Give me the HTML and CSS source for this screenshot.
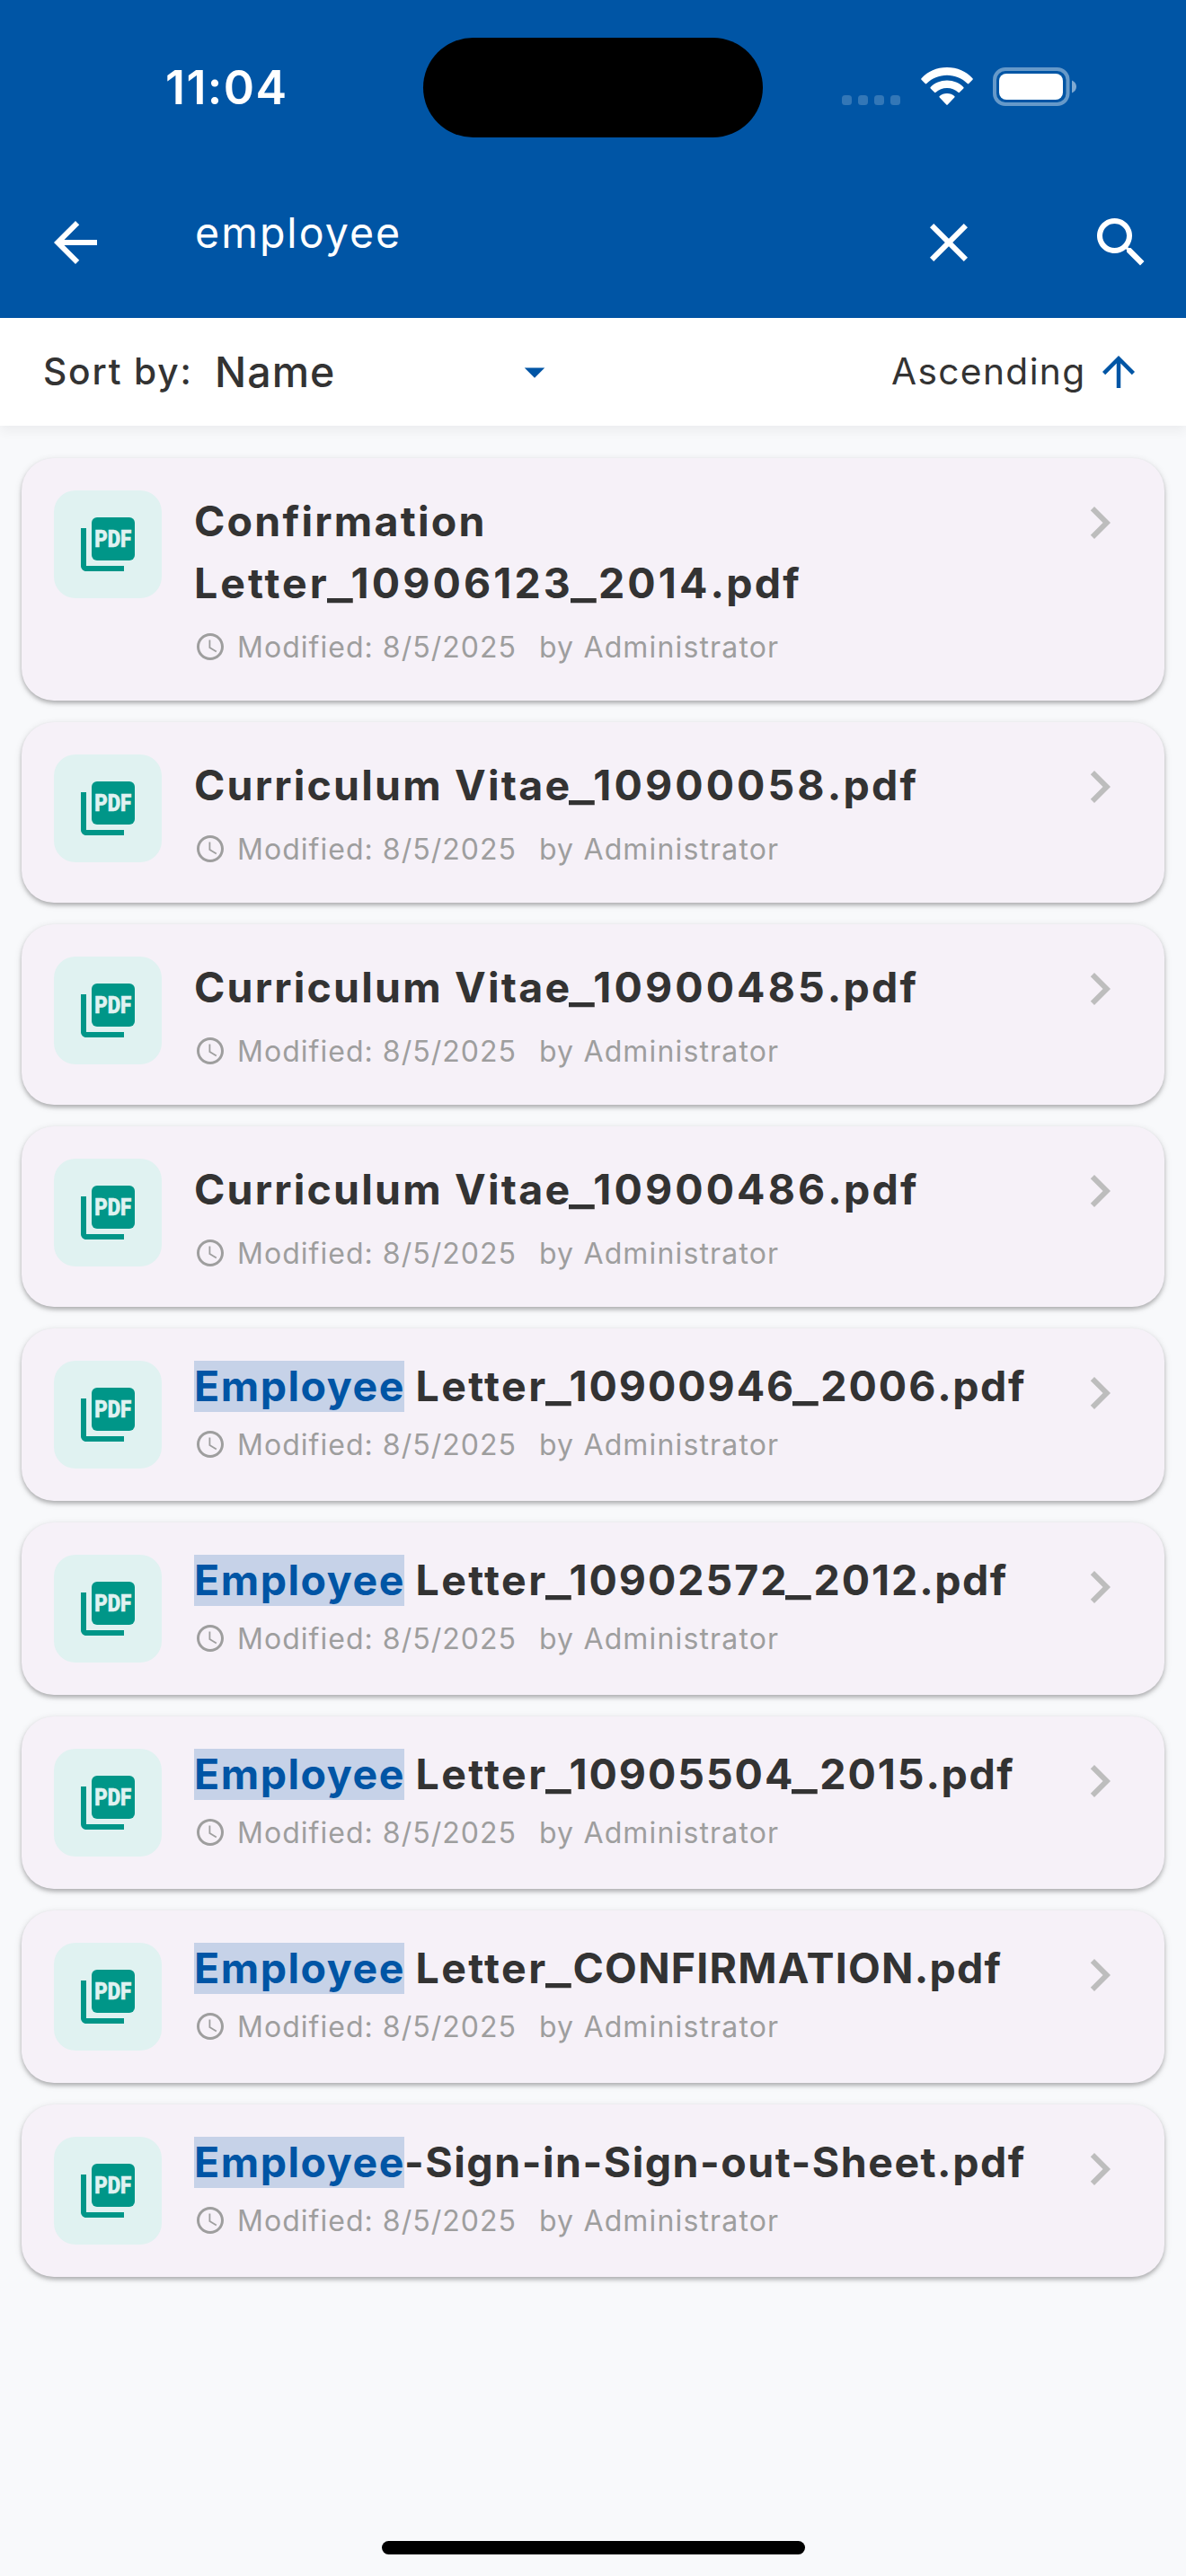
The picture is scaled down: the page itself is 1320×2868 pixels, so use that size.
FILE: index.html
```html
<!DOCTYPE html>
<html lang="en">
<head>
<meta charset="utf-8">
<title>Search files</title>
<link rel="stylesheet" href="styles.css">
</head>
<body>
<svg class="sprite" aria-hidden="true">
  <symbol id="pages" viewBox="0 0 72 72">
    <rect x="18" y="6" width="48" height="48" rx="6"/>
    <path d="M12 18H6v42c0 3.300 2.700 6 6 6h42v-6H12z"/>
  </symbol>
  <symbol id="clock" viewBox="0 0 24 24"><path d="M11.990 2C6.470 2 2 6.480 2 12s4.470 10 9.990 10C17.520 22 22 17.520 22 12S17.520 2 11.990 2zM12 20c-4.420 0-8-3.580-8-8s3.580-8 8-8 8 3.580 8 8-3.580 8-8 8zm.2-13H11v6l5.250 3.150.6-.98-4.650-2.770z"/></symbol>
  <symbol id="chevron" viewBox="0 0 24 24"><path d="M10 6 8.590 7.410 13.170 12l-4.580 4.590L10 18l6-6z"/></symbol>
</svg>

<header class="top">
  <div class="status">
    <span class="time">11:04</span>
    <div class="island"></div>
    <div class="indicators">
      <div class="dots"><i></i><i></i><i></i><i></i></div>
      <svg class="wifi" viewBox="0 0 58 42" fill="#fff"><path d="M29 0C40.500 0 50.500 4.600 57.500 12.200c.5.5.5 1.100 0 1.600l-4.200 4.200c-.5.5-1.100.5-1.600 0C45.800 12.300 37.800 8.800 29 8.800S12.200 12.300 6.300 18c-.5.5-1.100.5-1.600 0L.5 13.800c-.5-.5-.5-1.100 0-1.600C7.500 4.600 17.500 0 29 0zM29 14.500c7.300 0 13.700 2.800 18.300 7.400.5.5.5 1.100 0 1.600l-4.300 4.300c-.5.5-1.100.5-1.600 0C38 24.800 33.800 23 29 23s-9 1.800-12.400 4.800c-.5.5-1.100.5-1.600 0l-4.300-4.300c-.5-.5-.5-1.100 0-1.600C15.300 17.300 21.700 14.500 29 14.500zM29 29c3.300 0 6.200 1.100 8.300 3 .5.5.5 1.100 0 1.600l-7.600 7.900c-.4.5-1 .5-1.400 0l-7.600-7.900c-.5-.5-.5-1.100 0-1.600C22.800 30.100 25.700 29 29 29z"/></svg>
      <svg class="battery" viewBox="0 0 94 43"><rect x="2" y="2" width="81.500" height="39" rx="12" fill="none" stroke="#fff" stroke-opacity=".4" stroke-width="4"/><rect x="7" y="7" width="71" height="29" rx="8" fill="#fff"/><path d="M88 14.500c3 1.200 5 3.700 5 7S91 27.300 88 28.500z" fill="#fff" fill-opacity=".5"/></svg>
    </div>
  </div>
  <div class="appbar">
    <svg class="icon" viewBox="0 0 24 24"><path d="M20 11H7.830l5.590-5.590L12 4l-8 8 8 8 1.410-1.410L7.830 13H20v-2z"/></svg>
    <span class="query">employee</span>
    <svg class="icon" viewBox="0 0 24 24"><path d="M19 6.410 17.590 5 12 10.590 6.410 5 5 6.410 10.590 12 5 17.590 6.410 19 12 13.410 17.590 19 19 17.590 13.410 12z"/></svg>
    <svg class="icon search" viewBox="0 0 24 24"><path d="M15.500 14h-.79l-.28-.27C15.410 12.590 16 11.110 16 9.500 16 5.910 13.090 3 9.500 3S3 5.910 3 9.500 5.910 16 9.500 16c1.610 0 3.090-.59 4.230-1.570l.27.28v.79l5 4.990L20.490 19l-4.990-5zm-6 0C7.010 14 5 11.990 5 9.500S7.010 5 9.500 5 14 7.010 14 9.500 11.990 14 9.500 14z"/></svg>
  </div>
</header>

<section class="sort">
  <span class="label">Sort by:</span>
  <span class="field"><span class="value">Name</span><svg class="sort-icon" viewBox="0 0 24 24"><path d="m7 10 5 5 5-5z"/></svg></span>
  <span class="order">Ascending</span>
  <svg class="sort-icon" viewBox="0 0 24 24"><path d="m4 12 1.410 1.410L11 7.830V20h2V7.830l5.580 5.590L20 12l-8-8-8 8z"/></svg>
</section>

<main class="list">
  <article class="card">
    <div class="thumb"><svg viewBox="0 0 72 72"><use href="#pages"/><text x="21.200" y="39" textLength="41" lengthAdjust="spacingAndGlyphs">PDF</text></svg></div>
    <div class="info">
      <div class="title">Confirmation<br><span class="word">Letter</span><span class="us tight">_</span><span class="num">10906123</span><span class="us">_</span><span class="num">2014</span>.pdf</div>
      <div class="meta"><svg><use href="#clock"/></svg><span class="date">Modified: 8/5/2025</span><span class="author">by Administrator</span></div>
    </div>
    <svg class="chevron"><use href="#chevron"/></svg>
  </article>
  <article class="card">
    <div class="thumb"><svg viewBox="0 0 72 72"><use href="#pages"/><text x="21.200" y="39" textLength="41" lengthAdjust="spacingAndGlyphs">PDF</text></svg></div>
    <div class="info">
      <div class="title">Curriculum Vitae<span class="us tight">_</span><span class="num">10900058</span>.pdf</div>
      <div class="meta"><svg><use href="#clock"/></svg><span class="date">Modified: 8/5/2025</span><span class="author">by Administrator</span></div>
    </div>
    <svg class="chevron"><use href="#chevron"/></svg>
  </article>
  <article class="card">
    <div class="thumb"><svg viewBox="0 0 72 72"><use href="#pages"/><text x="21.200" y="39" textLength="41" lengthAdjust="spacingAndGlyphs">PDF</text></svg></div>
    <div class="info">
      <div class="title">Curriculum Vitae<span class="us tight">_</span><span class="num">10900485</span>.pdf</div>
      <div class="meta"><svg><use href="#clock"/></svg><span class="date">Modified: 8/5/2025</span><span class="author">by Administrator</span></div>
    </div>
    <svg class="chevron"><use href="#chevron"/></svg>
  </article>
  <article class="card">
    <div class="thumb"><svg viewBox="0 0 72 72"><use href="#pages"/><text x="21.200" y="39" textLength="41" lengthAdjust="spacingAndGlyphs">PDF</text></svg></div>
    <div class="info">
      <div class="title">Curriculum Vitae<span class="us tight">_</span><span class="num">10900486</span>.pdf</div>
      <div class="meta"><svg><use href="#clock"/></svg><span class="date">Modified: 8/5/2025</span><span class="author">by Administrator</span></div>
    </div>
    <svg class="chevron"><use href="#chevron"/></svg>
  </article>
  <article class="card hit">
    <div class="thumb"><svg viewBox="0 0 72 72"><use href="#pages"/><text x="21.200" y="39" textLength="41" lengthAdjust="spacingAndGlyphs">PDF</text></svg></div>
    <div class="info">
      <div class="title"><mark>Employee</mark> <span class="word">Letter</span><span class="us tight">_</span><span class="num">10900946</span><span class="us">_</span><span class="num">2006</span>.pdf</div>
      <div class="meta"><svg><use href="#clock"/></svg><span class="date">Modified: 8/5/2025</span><span class="author">by Administrator</span></div>
    </div>
    <svg class="chevron"><use href="#chevron"/></svg>
  </article>
  <article class="card hit">
    <div class="thumb"><svg viewBox="0 0 72 72"><use href="#pages"/><text x="21.200" y="39" textLength="41" lengthAdjust="spacingAndGlyphs">PDF</text></svg></div>
    <div class="info">
      <div class="title"><mark>Employee</mark> <span class="word">Letter</span><span class="us tight">_</span><span class="num">10902572</span><span class="us">_</span><span class="num">2012</span>.pdf</div>
      <div class="meta"><svg><use href="#clock"/></svg><span class="date">Modified: 8/5/2025</span><span class="author">by Administrator</span></div>
    </div>
    <svg class="chevron"><use href="#chevron"/></svg>
  </article>
  <article class="card hit">
    <div class="thumb"><svg viewBox="0 0 72 72"><use href="#pages"/><text x="21.200" y="39" textLength="41" lengthAdjust="spacingAndGlyphs">PDF</text></svg></div>
    <div class="info">
      <div class="title"><mark>Employee</mark> <span class="word">Letter</span><span class="us tight">_</span><span class="num">10905504</span><span class="us">_</span><span class="num">2015</span>.pdf</div>
      <div class="meta"><svg><use href="#clock"/></svg><span class="date">Modified: 8/5/2025</span><span class="author">by Administrator</span></div>
    </div>
    <svg class="chevron"><use href="#chevron"/></svg>
  </article>
  <article class="card hit">
    <div class="thumb"><svg viewBox="0 0 72 72"><use href="#pages"/><text x="21.200" y="39" textLength="41" lengthAdjust="spacingAndGlyphs">PDF</text></svg></div>
    <div class="info">
      <div class="title"><mark>Employee</mark> <span class="word">Letter</span><span class="us">_</span><span class="caps">CONFIRMATION.pdf</span></div>
      <div class="meta"><svg><use href="#clock"/></svg><span class="date">Modified: 8/5/2025</span><span class="author">by Administrator</span></div>
    </div>
    <svg class="chevron"><use href="#chevron"/></svg>
  </article>
  <article class="card hit">
    <div class="thumb"><svg viewBox="0 0 72 72"><use href="#pages"/><text x="21.200" y="39" textLength="41" lengthAdjust="spacingAndGlyphs">PDF</text></svg></div>
    <div class="info">
      <div class="title"><mark>Employee</mark>-Sign-in-Sign-out-Sheet.pdf</div>
      <div class="meta"><svg><use href="#clock"/></svg><span class="date">Modified: 8/5/2025</span><span class="author">by Administrator</span></div>
    </div>
    <svg class="chevron"><use href="#chevron"/></svg>
  </article>
</main>
<div class="home"></div>
</body>
</html>
```
FILE: styles.css
```css
* { box-sizing: border-box; }
body {
  margin: 0;
  width: 1320px;
  height: 2868px;
  display: flex;
  flex-direction: column;
  background: #f8f9fb;
  color: #333;
  font-family: Inter, "Liberation Sans", sans-serif;
  font-size: 46.5px;
  white-space: nowrap;
}
svg { display: block; flex: none; }
.sprite { position: absolute; width: 0; height: 0; }

.top { height: 354px; background: #0055a5; color: #fff; }
.status { height: 186px; display: flex; align-items: flex-start; }
.time { width: 471px; padding: 66px 0 0 184px; font-size: 52px; font-weight: 600; line-height: 64px; letter-spacing: 1.41px; }
.island { width: 378px; height: 111px; margin-top: 42px; border-radius: 56px; background: #000; }
.indicators { display: flex; padding: 75px 0 0 88px; }
.dots { display: flex; gap: 7px; padding-top: 31px; }
.dots i { width: 11px; height: 11px; border-radius: 3.5px; background: rgba(255,255,255,.2); }
.wifi { width: 58px; height: 42px; margin-left: 22.5px; }
.battery { width: 94px; height: 43px; margin-left: 22.5px; }
.appbar { height: 168px; display: flex; align-items: center; padding: 0 36px 0 48px; }
.icon { width: 72px; height: 72px; fill: #fff; }
.search { margin-left: 120px; }
.query { flex: 1; padding-left: 97px; height: 72px; line-height: 50px; letter-spacing: 2.02px; }

.sort {
  height: 120px;
  display: flex;
  align-items: center;
  padding: 0 48px;
  background: #fff;
  box-shadow: 0 6px 12px rgba(0,0,0,.05);
  font-size: 40.7px;
  line-height: 60px;
}
.label { width: 191px; font-weight: 500; letter-spacing: 1.82px; }
.field { width: 383px; display: flex; align-items: center; justify-content: space-between; font-size: 46.5px; font-weight: 500; letter-spacing: 1.04px; }
.order { margin-left: auto; width: 226px; letter-spacing: 1.36px; }
.sort-icon { width: 54px; height: 54px; fill: #0055a5; }

.list { display: flex; flex-direction: column; gap: 24px; padding: 36px 24px; }
.card {
  display: flex;
  align-items: flex-start;
  padding: 36px;
  border-radius: 36px;
  background: #f6f1f8;
  box-shadow: 0 3px 4px rgba(0,0,0,.22), 0 2px 9px rgba(0,0,0,.12);
}
.thumb { width: 120px; height: 120px; padding: 24px; border-radius: 24px; background: #e0f2f1; }
.thumb svg { width: 72px; height: 72px; fill: #009688; }
.thumb text { font: 900 25.5px Roboto, sans-serif; fill: #e0f2f1; stroke: #e0f2f1; stroke-width: .5px; }
.info { flex: 1; padding-left: 36px; }
.title { font-weight: 700; line-height: 69px; letter-spacing: 2.2px; }
.word { letter-spacing: 3px; }
.num { letter-spacing: 3.1px; }
/* underscores are drawn wider than the font's own glyph */
.us { display: inline-block; width: 31px; margin-left: -3px; letter-spacing: 0; transform: scaleX(1.3); transform-origin: left; }
.us.tight { width: 27px; }
.hit .title { line-height: 57px; letter-spacing: 1.5px; }
.hit .word { letter-spacing: 2.4px; }
.hit .num { letter-spacing: 1.95px; }
.hit .caps { letter-spacing: 1.2px; }
.title mark { display: inline-block; width: 234px; height: 57px; background: #c6d2e8; color: #0055a5; }
.meta { display: flex; align-items: center; height: 48px; margin-top: 12px; font-size: 32px; line-height: 46px; letter-spacing: 1.03px; color: #9e9e9e; }
.meta span { padding-top: 2px; }
.meta svg { width: 36px; height: 36px; margin-right: 12px; fill: #9e9e9e; }
.date { width: 336px; }
.author { letter-spacing: 1.15px; }
.chevron { width: 72px; height: 72px; fill: #bdbdbd; }

.home { position: absolute; left: 425px; top: 2829px; width: 471px; height: 15px; border-radius: 8px; background: #000; }
```
